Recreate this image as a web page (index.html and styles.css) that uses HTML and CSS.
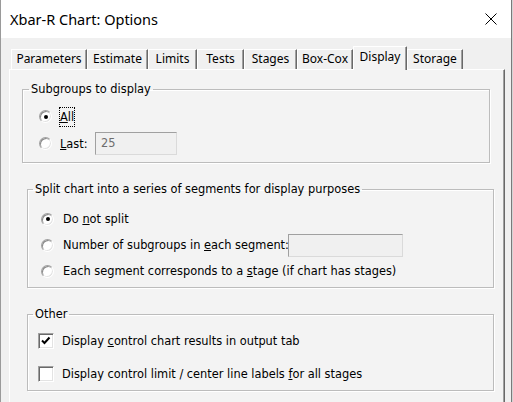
FILE: index.html
```html
<!DOCTYPE html>
<html lang="en">
<head>
    <meta charset="UTF-8">
    <title>Xbar-R Chart: Options</title>
    <link rel="stylesheet" href="styles.css">
</head>
<body>
    <div class="window">
        <div class="titlebar">
            <span class="title">Xbar-R Chart: Options</span>
            <svg class="close" width="12" height="12" viewBox="0 0 12 12">
                <path d="M0.5 0.5 L11.5 11.5 M11.5 0.5 L0.5 11.5" stroke="#000" stroke-width="1" fill="none"/>
            </svg>
        </div>

        <div class="tabs">
            <div class="tab" style="width: 76px">Parameters</div>
            <div class="tab" style="width: 61px">Estimate</div>
            <div class="tab" style="width: 49px">Limits</div>
            <div class="tab" style="width: 47px">Tests</div>
            <div class="tab" style="width: 53px">Stages</div>
            <div class="tab" style="width: 56px">Box-Cox</div>
            <div class="tab active" style="width: 54px">Display</div>
            <div class="tab" style="width: 56px">Storage</div>
        </div>

        <div class="panel">
            <fieldset class="group group-subgroups">
                <legend>Subgroups to display</legend>
                <div class="row">
                    <span class="radio checked"></span>
                    <label class="focus"><u>A</u>ll</label>
                </div>
                <div class="row">
                    <span class="radio"></span>
                    <label class="last-label"><u>L</u>ast:</label>
                    <span class="field last-field">25</span>
                </div>
            </fieldset>

            <fieldset class="group group-split">
                <legend>Split chart into a series of segments for display purposes</legend>
                <div class="row">
                    <span class="radio checked"></span>
                    <label>Do <u>n</u>ot split</label>
                </div>
                <div class="row">
                    <span class="radio"></span>
                    <label class="clip-label">Number of subgroups in <u>e</u>ach segment:</label>
                    <span class="field number-field"></span>
                </div>
                <div class="row">
                    <span class="radio"></span>
                    <label>Each segment corresponds to a <u>s</u>tage (if chart has stages)</label>
                </div>
            </fieldset>

            <fieldset class="group group-other">
                <legend>Other</legend>
                <div class="row row-tall">
                    <span class="checkbox">
                        <svg width="14" height="14" viewBox="0 0 14 14">
                            <path d="M3 6.5 L5.5 9 L10.5 3.5" stroke="#000" stroke-width="2" fill="none"/>
                        </svg>
                    </span>
                    <label>Display <u>c</u>ontrol chart results in output tab</label>
                </div>
                <div class="row row-tall">
                    <span class="checkbox"></span>
                    <label>Display control limit / center line labels <u>f</u>or all stages</label>
                </div>
            </fieldset>
        </div>
    </div>
</body>
</html>
```

FILE: styles.css
```css
html {
    background-color: #d4d4d4;
}
body {
    margin: 0;
    font-family: 'DejaVu Sans', sans-serif;
    font-size: 11.4px;
    color: #000000;
}
.window {
    box-sizing: border-box;
    width: 512px;
    height: 402px;
    overflow: hidden;
    background-color: #f0f0f0;
    border-left: 1px solid #9a9a9a;
    border-right: 1px solid #7a7a7a;
}
.titlebar {
    height: 38px;
    background-color: #ffffff;
    display: flex;
    align-items: center;
}
.title {
    margin-left: 9px;
    font-family: 'Noto Sans', sans-serif;
    font-size: 14.5px;
    flex: 1;
}
.close {
    margin-right: 14px;
}
.tabs {
    display: flex;
    align-items: flex-end;
    height: 22px;
    margin-top: 9px;
    padding-left: 10px;
    position: relative;
    z-index: 1;
}
.tab {
    box-sizing: border-box;
    height: 20px;
    font-family: 'Noto Sans', sans-serif;
    font-size: 12px;
    line-height: 18px;
    text-align: center;
    background-color: #f0f0f0;
    border-top: 1px solid #ffffff;
    border-left: 1px solid #ffffff;
    border-right: 1px solid #696969;
    box-shadow: inset -1px 0 0 #a0a0a0;
}
.tab.active {
    height: 24px;
    margin-bottom: -1px;
    line-height: 19px;
    background-color: #f3f3f3;
    border-radius: 1px 1px 0 0;
}
.panel {
    box-sizing: border-box;
    margin-left: 8px;
    width: 496px;
    height: 340px;
    background-color: #f3f3f3;
    border-top: 1px solid #ffffff;
    border-left: 1px solid #ffffff;
    border-right: 1px solid #696969;
    box-shadow: inset -1px 0 0 #a0a0a0;
    overflow: hidden;
}
.group {
    box-sizing: border-box;
    margin: 0;
    padding: 0;
    min-width: 0;
    border: 1px solid #bcbcbc;
    box-shadow: 1px 1px 0 #ffffff, inset 1px 1px 0 #ffffff;
}
.group legend {
    padding: 0 2px;
    line-height: 14px;
}
.group-subgroups {
    margin: 12px 0 0 12px;
    width: 468px;
    padding: 7px 0 5px 16px;
}
.group-subgroups legend {
    margin-left: -10px;
}
.group-split {
    margin: 19px 0 0 17px;
    width: 467px;
    padding: 10px 0 3px 13px;
}
.group-split legend {
    margin-left: -8px;
}
.group-other {
    margin: 19px 0 0 17px;
    width: 467px;
    padding: 3px 0 0 10px;
}
.group-other legend {
    margin-left: -5px;
}
.row {
    display: flex;
    align-items: center;
    height: 27px;
}
.group-split .row {
    height: 26px;
}
.row-tall {
    height: 33px;
}
.radio {
    box-sizing: border-box;
    width: 13px;
    height: 13px;
    border-radius: 50%;
    background-color: #ffffff;
    border: 1px solid;
    border-color: #a0a0a0 #ffffff #ffffff #a0a0a0;
    box-shadow: inset 1px 1px 0 #8a8a8a, inset -1px -1px 0 #e3e3e3;
    display: flex;
    align-items: center;
    justify-content: center;
    margin-right: 8px;
    flex-shrink: 0;
}
.radio.checked::after {
    content: '';
    width: 4px;
    height: 4px;
    border-radius: 50%;
    background-color: #000000;
}
.group-split .radio {
    margin-right: 9px;
}
.checkbox {
    box-sizing: border-box;
    width: 16px;
    height: 16px;
    background-color: #ffffff;
    border: 1px solid;
    border-color: #a0a0a0 #ffffff #ffffff #a0a0a0;
    box-shadow: inset 1px 1px 0 #696969, inset -1px -1px 0 #e3e3e3;
    margin-right: 8px;
    flex-shrink: 0;
}
.checkbox svg {
    display: block;
}
label {
    white-space: nowrap;
}
.focus {
    border: 1px dotted #000000;
    padding: 2px 0;
    margin-left: -1px;
    line-height: 14px;
}
.last-label {
    width: 35px;
}
.field {
    box-sizing: border-box;
    height: 23px;
    background-color: #f0f0f0;
    border: 1px solid;
    border-color: #a0a0a0 #dadada #dadada #a0a0a0;
    color: #6d6d6d;
    padding-left: 5px;
    line-height: 21px;
}
.last-field {
    width: 82px;
}
.clip-label {
    width: 225px;
    overflow: hidden;
}
.number-field {
    width: 115px;
}
```
